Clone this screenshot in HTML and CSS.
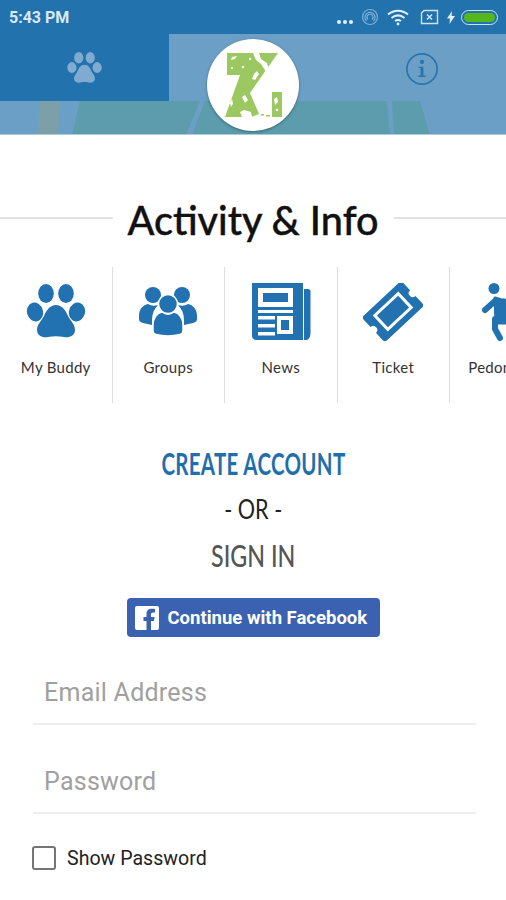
FILE: index.html
```html
<!DOCTYPE html>
<html lang="en">
<head>
    <meta charset="UTF-8">
    <meta name="viewport" content="width=device-width, initial-scale=1.0">
    <title>Activity &amp; Info</title>
    <link rel="stylesheet" href="styles.css">
</head>
<body>
    <!-- Status bar -->
    <div class="status-bar">
        <span class="status-time">5:43 PM</span>
        <div class="status-icons">
            <span class="status-dots"></span>
            <svg class="ic-sync" width="18" height="18" viewBox="0 0 18 18" fill="none" stroke="#7fb0d6" stroke-width="1.2">
                <circle cx="9" cy="9" r="7.5"/>
                <path d="M5.5 13a5 5 0 1 1 7 0"/>
                <path d="M7 11.5a3 3 0 1 1 4 0"/>
            </svg>
            <svg class="ic-wifi" width="22" height="18" viewBox="0 0 22 18" fill="none" stroke="#e4eff7" stroke-width="2">
                <path d="M1 6.5c6-5 14-5 20 0"/>
                <path d="M4.5 10c4-3.2 9-3.2 13 0"/>
                <path d="M8 13c2-1.4 4-1.4 6 0"/>
                <circle cx="11" cy="16" r="1.4" fill="#e4eff7" stroke="none"/>
            </svg>
            <svg class="ic-sim" width="19" height="16" viewBox="0 0 19 16" fill="none" stroke="#cfe1ef" stroke-width="1.4">
                <path d="M4 1.5h13.5v13H1.5V4z"/>
                <path d="M7 5.5l5 5M12 5.5l-5 5" stroke-width="1.6"/>
            </svg>
            <svg class="ic-bolt" width="8" height="13" viewBox="0 0 8 13">
                <path d="M5 0L0 7.5h3L2.5 13 8 5H4.6z" fill="#e4eff7"/>
            </svg>
            <span class="battery"><span class="battery-fill"></span></span>
        </div>
    </div>

    <!-- Top tabs -->
    <div class="tabs">
        <div class="tab tab-active">
            <svg width="35" height="31" viewBox="0 0 60 54" fill="#7fabd0">
                <ellipse cx="20" cy="10" rx="8" ry="10"/>
                <ellipse cx="40" cy="10" rx="8" ry="10"/>
                <ellipse cx="8" cy="27" rx="8" ry="9.5"/>
                <ellipse cx="52" cy="27" rx="8" ry="9.5"/>
                <path d="M30 22c-7 0-10 6-13 13-3 5-6 8-5 13 1 5 6 6 11 5 5-1 10-1 14 0 5 1 10 0 11-5 1-5-2-8-5-13-3-7-6-13-13-13z"/>
            </svg>
        </div>
        <div class="tab tab-rest">
            <svg class="ic-info" width="34" height="34" viewBox="0 0 36 36" fill="none" stroke="#2a74ad" stroke-width="1.8">
                <circle cx="18" cy="18" r="16"/>
                <circle cx="18" cy="10.5" r="2.2" fill="#2a74ad" stroke="none"/>
                <path d="M14.5 15.5h5v9.5h2.5v1.6h-8v-1.600h2.500v-8h-2z" fill="#2a74ad" stroke="none"/>
            </svg>
        </div>
    </div>

    <!-- Faixa com a foto desfocada -->
    <svg class="strip" width="506" height="34" viewBox="0 0 506 34" preserveAspectRatio="none">
        <rect width="506" height="34" fill="#6b9fc6"/>
        <polygon points="40,0 60,0 58,34 38,34" fill="#7d9fa8"/>
        <polygon points="80,0 200,0 186,34 72,34" fill="#5c9cad"/>
        <polygon points="205,0 387,0 390,34 192,34" fill="#5c9cad"/>
        <polygon points="392,0 420,0 430,34 394,34" fill="#5c9cad"/>
        <rect y="33" width="506" height="1" fill="#a9cdd6"/>
    </svg>

    <!-- Logo -->
    <div class="logo">
        <svg width="60" height="70" viewBox="0 0 60 70">
            <path d="M4 3H55L27 43 36 64 28 67H2L17 25H4zM49 42H59V67H49z" fill="#9cc862"/>
            <g fill="#fff">
                <polygon points="30,3 36,3 38,9 44,13 46,20 43,22 38,14 33,10"/>
                <polygon points="31,24 34,21 36,24 32,30 29,29"/>
                <polygon points="19,47 22,45 25,50 22,53"/>
                <polygon points="17,62 21,60 28,62 29,67 19,67"/>
                <polygon points="7,53 9,49 10,54 8,57"/>
                <polygon points="51,49 54,47 55,52 52,55"/>
                <polygon points="9,7 14,6 12,9 8,10"/>
                <circle cx="20" cy="17" r="1.300"/>
                <circle cx="27" cy="9" r="1.200"/>
                <circle cx="54" cy="60" r="1.300"/>
                <circle cx="9" cy="18" r="1"/>
            </g>
            <g fill="#9cc862">
                <rect x="38" y="64" width="3" height="1.500"/>
                <rect x="43" y="65" width="4" height="1.500"/>
            </g>
        </svg>
    </div>

    <!-- Activity -->
    <div class="title-row">
        <span class="title-line"></span>
        <h1>Activity &amp; Info</h1>
        <span class="title-line"></span>
    </div>

    <div class="activity-row">
        <div class="activity-item">
            <svg width="60" height="60" viewBox="0 0 60 60" fill="#2271b1">
                <ellipse cx="20" cy="10.5" rx="7.8" ry="9.5"/>
                <ellipse cx="40" cy="10.5" rx="7.8" ry="9.5"/>
                <ellipse cx="9" cy="29" rx="8" ry="9.5" transform="rotate(-15 9 29)"/>
                <ellipse cx="51" cy="29" rx="8" ry="9.5" transform="rotate(15 51 29)"/>
                <path d="M30 22c-6 0-9.500 5-12 11-2.500 5-7 8-7 14 0 6 6 8 11 7 5-1 11-1 16 0 5 1 11-1 11-7 0-6-4.500-9-7-14-2.500-6-6-11-12-11z"/>
            </svg>
            <span>My Buddy</span>
        </div>
        <div class="activity-item">
            <svg width="60" height="60" viewBox="0 0 60 60" fill="#2271b1">
                <circle cx="15" cy="12" r="8"/>
                <circle cx="44" cy="12" r="8"/>
                <path d="M1 33c0-7 4-11 9-12 3 2 7 2 10 1-4 4-6 9-6 15v5l-9-2c-3-1-4-2-4-4z"/>
                <path d="M59 33c0-7-4-11-9-12-3 2-7 2-10 1 4 4 6 9 6 15v5l9-2c3-1 4-2 4-4z"/>
                <circle cx="30" cy="21" r="9.500" stroke="#fff" stroke-width="1.500"/>
                <path d="M15 42c0-7 4-12 9-13 4 3 8 3 12 0 5 1 9 6 9 13v6c0 2-1 3-3 3.500-8 2-16 2-24 0-2-.5-3-1.500-3-3.500z" stroke="#fff" stroke-width="1.500"/>
            </svg>
            <span>Groups</span>
        </div>
        <div class="activity-item">
            <svg width="60" height="60" viewBox="0 0 60 60" fill="#2271b1">
                <path d="M1 0h51v57H5c-2 0-4-2-4-4z"/>
                <path d="M53 6h4c1.500 0 2.500 1 2.500 2.500V50c0 4-2 7-4 7h-2.500z"/>
                <g fill="#fff">
                    <path d="M7 5h35v19H7zM12 10v9h25v-9z" fill-rule="evenodd"/>
                    <rect x="7" y="27" width="35" height="3"/>
                    <rect x="7" y="33" width="17" height="3.500"/>
                    <rect x="7" y="41" width="17" height="3.500"/>
                    <rect x="7" y="49" width="17" height="3.500"/>
                    <path d="M26 33h16v18H26zM30 37v10h8V37z" fill-rule="evenodd"/>
                </g>
            </svg>
            <span>News</span>
        </div>
        <div class="activity-item">
            <svg width="60" height="60" viewBox="0 0 60 60">
                <g transform="translate(30 28.500) rotate(-43)">
                    <path d="M-27-14q0-3 3-3h48q3 0 3 3v10a4 4 0 0 0 0 8v10q0 3-3 3h-48q-3 0-3-3v-10a4 4 0 0 0 0-8z" fill="#2271b1"/>
                    <rect x="-16" y="-9.500" width="32" height="19" fill="none" stroke="#fff" stroke-width="3"/>
                </g>
            </svg>
            <span>Ticket</span>
        </div>
        <div class="activity-item">
            <svg width="60" height="60" viewBox="0 0 60 60" fill="#2271b1" stroke="#2271b1" stroke-linecap="round" stroke-linejoin="round">
                <circle cx="18" cy="5.500" r="5.500" stroke="none"/>
                <path d="M9 27L19 18" fill="none" stroke-width="6"/>
                <path d="M19 15L29 18 33 40 20 40z" stroke-width="3"/>
                <path d="M19 36V46L24 55" fill="none" stroke-width="6"/>
                <path d="M32 38L44 54" fill="none" stroke-width="6"/>
                <path d="M28 18L38 26 48 28" fill="none" stroke-width="5"/>
            </svg>
            <span>Pedometer</span>
        </div>
    </div>

    <!-- Login -->
    <div class="login">
        <a class="create-account">CREATE ACCOUNT</a>
        <div class="or">- OR -</div>
        <div class="sign-in">SIGN IN</div>
        <button class="btn-facebook">
            <svg width="24" height="24" viewBox="0 0 24 24">
                <path d="M2 0h20a2 2 0 0 1 2 2v20a2 2 0 0 1-2 2h-6v-9h3l.5-4H16V8.500c0-1.200.5-2 2-2h2V3c-4-.8-8.500-.3-8.500 4.500V11H8.500v4h3v9H2a2 2 0 0 1-2-2V2a2 2 0 0 1 2-2z" fill="#fff"/>
            </svg>
            Continue with Facebook
        </button>
    </div>

    <form class="login-form">
        <input class="field" type="text" placeholder="Email Address">
        <input class="field" type="password" placeholder="Password">
        <label class="show-password">
            <span class="checkbox"></span>
            Show Password
        </label>
    </form>
</body>
</html>
```

FILE: styles.css
```css
body {
    margin: 0;
    width: 506px;
    height: 900px;
    overflow: hidden;
    position: relative;
    background-color: white;
    font-family: "Roboto", sans-serif;
}

/* Status bar */
.status-bar {
    height: 34px;
    background-color: #2272ae;
    display: flex;
    align-items: center;
    justify-content: space-between;
    padding: 0 8px 0 9px;
}

.status-time {
    color: #dbe8f3;
    font-size: 16px;
    font-weight: 700;
}

.status-icons {
    display: flex;
    align-items: center;
}

.status-dots {
    width: 4px;
    height: 4px;
    margin: 9px 20px 0 0;
    background-color: #e4eff7;
    border-radius: 50%;
    box-shadow: 6px 0 0 #e4eff7, 12px 0 0 #e4eff7;
}

.ic-wifi {
    margin-left: 8px;
}

.ic-sim {
    margin-left: 11px;
}

.ic-bolt {
    margin-left: 8px;
}

.battery {
    width: 37px;
    height: 15px;
    margin-left: 6px;
    box-sizing: border-box;
    padding: 2px;
    border: 1px solid #cfe1ef;
    border-radius: 8px;
    display: flex;
}

.battery-fill {
    flex: 1;
    background-color: #56b71c;
    border-radius: 6px;
}

/* Tabs */
.tabs {
    display: flex;
    height: 67px;
    background-color: #6b9fc6;
}

.tab {
    display: flex;
    align-items: center;
}

.tab-active {
    width: 169px;
    justify-content: center;
    background-color: #2272ae;
}

.tab-rest {
    flex: 1;
    justify-content: flex-end;
    padding: 2px 67px 0 0;
}

.strip {
    display: block;
}

/* Logo por cima do cabeçalho */
.logo {
    position: absolute;
    left: 207px;
    top: 39px;
    width: 92px;
    height: 92px;
    background-color: white;
    border-radius: 50%;
    box-shadow: 0 1px 3px rgba(0, 0, 0, 0.35);
    display: flex;
    align-items: center;
    justify-content: center;
}

/* Activity */
.title-row {
    display: flex;
    align-items: center;
    gap: 15px;
    margin-top: 61px;
    height: 46px;
}

.title-line {
    flex: 1;
    height: 2px;
    margin-top: -3px;
    background-color: #e2e2e2;
}

h1 {
    margin: 0;
    font-family: "Lato", sans-serif;
    font-size: 39.600px;
    font-weight: 500;
    -webkit-text-stroke: 0.4px #111;
    color: #111;
    white-space: nowrap;
}

.activity-row {
    display: flex;
    margin-top: 25px;
    height: 136px;
    overflow: hidden;
}

.activity-item {
    flex: 0 0 112.5px;
    box-sizing: border-box;
    height: 136px;
    padding-top: 16px;
    border-right: 1px solid #ddd;
    display: flex;
    flex-direction: column;
    align-items: center;
    font-family: "Lato", sans-serif;
    font-size: 15px;
    letter-spacing: 0.3px;
    color: #333;
}

.activity-item span {
    margin-top: 15px;
    white-space: nowrap;
}

/* Login */
.login {
    display: flex;
    flex-direction: column;
    align-items: center;
    margin-top: 42px;
    font-family: "Lato", sans-serif;
}

.create-account {
    color: #1f6fae;
    font-size: 31px;
    font-weight: 700;
    line-height: 36px;
    letter-spacing: 0.5px;
    transform: scaleX(0.66);
    white-space: nowrap;
}

.or {
    margin-top: 10px;
    color: #222;
    font-size: 27px;
    line-height: 36px;
    transform: scaleX(0.8);
}

.sign-in {
    margin-top: 10px;
    color: #555;
    font-size: 31px;
    font-weight: 500;
    line-height: 36px;
    transform: scaleX(0.75);
}

.btn-facebook {
    width: 253px;
    height: 39px;
    margin-top: 25px;
    padding: 0 0 0 8px;
    display: flex;
    align-items: center;
    gap: 9px;
    background-color: #3b62b0;
    border: none;
    border-radius: 4px;
    color: white;
    font-family: "Roboto", sans-serif;
    font-size: 18.500px;
    font-weight: 700;
}

/* Form */
.login-form {
    margin: 0 30px 0 33px;
    padding-top: 30px;
}

.field {
    display: block;
    width: 100%;
    height: 58px;
    box-sizing: border-box;
    margin-bottom: 31px;
    padding: 0 0 6px 11px;
    border: none;
    border-bottom: 2px solid #eee;
    outline: none;
    font-family: "Roboto", sans-serif;
    font-size: 25px;
    letter-spacing: 0.25px;
}

.field::placeholder {
    color: #a0a0a0;
}

.show-password {
    display: flex;
    align-items: center;
    gap: 11px;
    margin-left: -1px;
    padding-top: 1px;
    font-size: 19.600px;
    color: #222;
}

.checkbox {
    width: 24px;
    height: 24px;
    box-sizing: border-box;
    border: 2px solid #757575;
    border-radius: 3px;
}
```
